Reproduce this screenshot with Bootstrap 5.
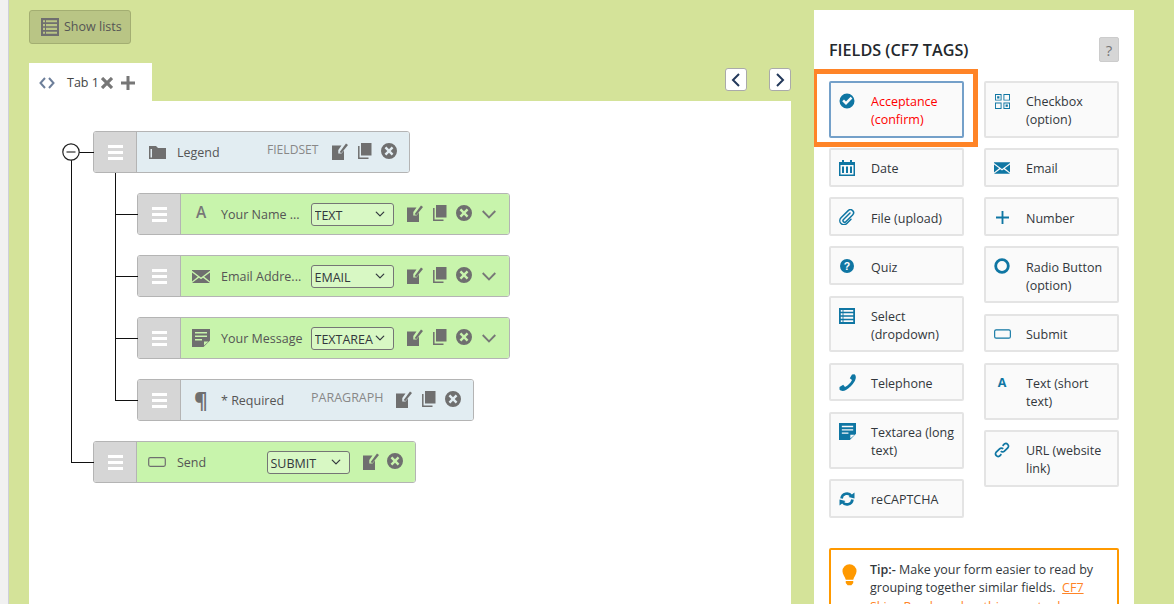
<!DOCTYPE html>
<html lang="en">
<head>
<meta charset="utf-8">
<title>CF7 Skins Form</title>
<link href="https://cdn.jsdelivr.net/npm/bootstrap@5.3.0/dist/css/bootstrap.min.css" rel="stylesheet">
<style>
html,body{height:604px;overflow:hidden}
body{font-family:"Open Sans","Noto Sans",sans-serif;font-size:12.5px;line-height:18.2px;color:#32373c;background:#f1f1f1;padding-left:8px}
.page-bg{background:#d4e399;border-left:1px solid #ced0d8;height:604px;overflow:hidden;padding:10px 40px 0 20px}
.col-left{width:762px}
.col-right{width:320px;background:#fff;padding:0 15px;height:594px;overflow:hidden}
.lists-btn{width:102px;height:34px;background:#b9c585;border:1px solid #a3ae72;border-radius:3px;padding:0 0 0 11px;color:#555;gap:5px;font-size:12.5px}
.lists-btn svg{color:#6f6f6f}
.tabs-row{margin-top:19px;height:38px}
.tab-head{width:123px;height:38px;background:#fff;padding:2px 0 0 10px;color:#444}
.tab-tool{color:#777;flex:none;display:block}
.tab-label{margin-left:12px;margin-right:2px}
.pager{gap:22px;padding-top:5px}
.pager-btn{width:22px;height:23px;background:#fff;border:1px solid #aaa;border-radius:3px;padding:0;color:#23395b}
.canvas{background:#fff;height:503px;padding:30px 0 0 64px;position:relative;gap:20px}
.tree-kids{padding-left:44px;gap:20px}
.node{height:42px;position:relative;border:1px solid #b4b4b4;border-radius:3px;color:#555}
.node::before{content:"";position:absolute;border-left:1px solid #111;border-bottom:1px solid #111}
.kid::before{left:-23px;width:23px;top:-42px;height:63px}
.kid-first::before{top:-21px;height:42px}
.root-last::before{left:-23px;width:23px;top:-282px;height:303px}
.root-first::before{left:-15px;width:15px;top:20px;height:1px;border-left:0;border-bottom:1px solid #111}
.root-first::after{content:"";position:absolute;left:21px;top:41px;height:21px;border-left:1px solid #111}
.minus-toggle{position:absolute;left:-32px;top:11px;width:18px;height:18px;display:block;z-index:1}
.trunk-top{position:absolute;left:-23px;top:28px;height:40px;border-left:1px solid #111}
.w-fieldset{width:317px}.w-kid{width:373px}.w-para{width:337px}.w-send{width:323px}
.grip{width:43px;background:#d6d6d6;border-right:1px solid #b4b4b4;border-radius:2px 0 0 2px;flex:none;color:#fff}
.node-body{flex:1;border-radius:0 2px 2px 0;position:relative}
.blue-body{background:#e2edf2}
.green-body{background:#c8f4ac}
.node-icon{width:18px;margin-left:11px;flex:none;color:#6f6f6f;text-align:center;line-height:1}
.node-label{margin-left:11px;width:90px;flex:none;white-space:nowrap;padding-top:2px}
.glyph-a{font-size:15.5px;font-weight:600;color:#777;margin-top:-2px}
.glyph-p{font-size:21px;font-weight:700}
.type-name{color:#888;position:relative;top:-2px;flex:none}
.type-fs{width:52px;font-size:12.1px}
.type-pg{width:72px}
.tree-select{width:83px;height:23px;flex:none;font-size:12.5px;line-height:20px;padding:2px 0 0 2.500px;color:#32373c;background-color:#d8f8c4;background-size:12px 10px;background-position:right 7px center;border:1px solid #757575;border-radius:3px;font-family:inherit}
.tool{color:#6f6f6f;flex:none;display:block}
.tools{gap:9.500px;margin-left:13px;margin-top:-2px}
.tools-short{gap:8px}
.chev{margin-left:.5px;margin-top:2px;color:#777}
.panel-head{height:71px;padding-top:27px}
.panel-title{font-size:16.200px;font-weight:600;margin:1px 0 0;color:#23282d;line-height:24px}
.help-btn{width:20px;height:25px;background:#d6d6d6;border:1px solid #ccc;border-radius:2px;padding:0;color:#777;font-size:15px;line-height:22px}
.tag-cols{gap:20px}
.tag-col{width:135px;gap:10.500px}
.tag-item{position:relative;background:#fafafa;border:2px solid #e4e4e4;border-radius:2px;padding:10.200px 4px 6.200px 40px;margin:0}
.tag-icon{position:absolute;left:7px;top:9px;width:18px;height:18px;color:#0f76a3;display:flex;align-items:center;justify-content:center;font-weight:700;line-height:1}
.tag-item.tag-active{border-color:#74a0c9;color:#f00}
.tag-item.tag-active::after{content:"";position:absolute;left:-19px;right:-16px;top:-14px;bottom:-11px;border:5px solid #ff8427}
.tip-box{position:relative;width:290px;margin-top:30px;border:2px solid #f90;border-radius:2px;padding:11.500px 8px 0 39px}
.tip-bulb{position:absolute;left:11px;top:14px;color:#f90}
.tip-link{color:#ff8427}
</style>
</head>
<body>
<svg width="0" height="0" class="d-block position-absolute">
<defs>
<symbol id="i-list" viewBox="0 0 18 18"><path fill="currentColor" fill-rule="evenodd" d="M0 0H18V18H0ZM2 2.300V4.300H4V2.300ZM5 2.300V4.300H16V2.300ZM2 6V8.200H4V6ZM5 6V8.200H16V6ZM2 9.800V12H4V9.800ZM5 9.800V12H16V9.800ZM2 13.700V15.800H4V13.700ZM5 13.700V15.800H16V13.700Z"/></symbol>
<symbol id="i-edit" viewBox="0 0 16 17"><path fill="currentColor" d="M0 2.500H9.500L6.300 7V10.500H9.500L12 7.500V17H0Z"/><path fill="currentColor" d="M7.500 9.200 14 .5 16 2 9.500 10Z"/></symbol>
<symbol id="i-copy" viewBox="0 0 14 16"><path fill="currentColor" d="M3 0H13.500V12.500H3Z"/><path fill="none" stroke="currentColor" stroke-width="1.500" d="M.8 3V15.200H10.500"/></symbol>
<symbol id="i-close" viewBox="0 0 16 16"><path fill="currentColor" fill-rule="evenodd" d="M8 0a8 8 0 1 0 0 16a8 8 0 1 0 0-16ZM5.300 3.600 8 6.300 10.700 3.600 12.400 5.300 9.700 8 12.400 10.700 10.700 12.400 8 9.700 5.300 12.400 3.600 10.700 6.300 8 3.600 5.300Z"/></symbol>
<symbol id="i-chev" viewBox="0 0 14 9"><path fill="none" stroke="currentColor" stroke-width="1.800" d="M.7 1 7 7.500 13.300 1"/></symbol>
<symbol id="i-folder" viewBox="0 0 17 13"><path fill="currentColor" fill-rule="evenodd" d="M0 0H7L9 2H17V13H0ZM1.500 3V11.500H3V3Z"/></symbol>
<symbol id="i-mail" viewBox="0 0 18 13"><path fill="currentColor" d="M0 0H18V.8L9 7.500 0 .8ZM0 2.500 5.800 6.800 0 11.500ZM18 2.500V11.500L12.200 6.800ZM7 7.800 9 9.300 11 7.800 18 13H0Z"/></symbol>
<symbol id="i-note" viewBox="0 0 18 18"><path fill="currentColor" fill-rule="evenodd" d="M0 0H18V11.500L11.500 18H0ZM3 3V4.500H15V3ZM3 6.500V8H15V6.500ZM3 10V11.500H10V10ZM12 12.500V16.500L16.500 12.500Z"/></symbol>
<symbol id="i-button" viewBox="0 0 18 10"><rect x=".7" y=".7" width="16.600" height="8.600" rx="1.500" fill="none" stroke="currentColor" stroke-width="1.200"/></symbol>
<symbol id="i-check" viewBox="0 0 16 16"><path fill="currentColor" fill-rule="evenodd" d="M8 .5a7.500 7.500 0 1 0 0 15a7.500 7.500 0 1 0 0-15ZM11.600 3.800 13.400 5.600 7 12 3.200 8.300 5 6.500 7 8.400Z"/></symbol>
<symbol id="i-box" viewBox="0 0 16 16"><path fill="currentColor" fill-rule="evenodd" d="M0 0H7V7H0ZM1 1V6H6V1ZM2.300 2.300H4.700V4.700H2.300ZM9 0H16V7H9ZM10 1V6H15V1ZM0 9H7V16H0ZM1 10V15H6V10ZM9 9H16V16H9ZM10 10V15H15V10ZM11.300 11.300H13.700V13.700H11.300Z"/></symbol>
<symbol id="i-cal" viewBox="0 0 16 16"><path fill="currentColor" fill-rule="evenodd" d="M3 0H5V2H11V0H13V2H16V16H0V2H3ZM1.500 5V14.500H14.500V5ZM3 6.500H5V13H3ZM7 6.500H9V13H7ZM11 6.500H13V13H11Z"/></symbol>
<symbol id="i-clip" viewBox="0 0 16 16"><path fill="none" stroke="currentColor" stroke-width="1.500" stroke-linecap="round" d="M11 4 4.500 10.500a1.600 1.600 0 0 0 2.300 2.300L13.600 6a3 3 0 0 0-4.400-4.400L2 8.800a4 4 0 0 0 5.800 5.700L12 10.300"/></symbol>
<symbol id="i-plus" viewBox="0 0 14 14"><path fill="currentColor" d="M6 0H8V6H14V8H8V14H6V8H0V6H6Z"/></symbol>
<symbol id="i-plus-bold" viewBox="0 0 14 14"><path fill="currentColor" d="M5.500 0H8.500V5.500H14V8.500H8.500V14H5.500V8.500H0V5.500H5.500Z"/></symbol>
<symbol id="i-ring" viewBox="0 0 16 16"><circle cx="8" cy="8" r="6.300" fill="none" stroke="currentColor" stroke-width="2.800"/></symbol>
<symbol id="i-phone" viewBox="0 0 17 17"><path fill="currentColor" d="M.5 13 4.200 10.800 6 13C9 11.500 11.500 9 13 6L10.800 4.200 13 .5 15.500.2C17.500 2 17 4.500 15.500 7.500 13.500 11 10.500 14 7 16 4.500 17.300 2 17.300.5 15.500Z"/></symbol>
<symbol id="i-link" viewBox="0 0 16 16"><path fill="none" stroke="currentColor" stroke-width="1.700" d="M6.800 9.200a2.500 2.500 0 0 0 3.600 0L14 5.600A2.600 2.600 0 0 0 10.400 2L8.600 3.800M9.200 6.800a2.500 2.500 0 0 0-3.600 0L2 10.400A2.600 2.600 0 0 0 5.600 14L7.400 12.200"/></symbol>
<symbol id="i-sync" viewBox="0 0 16 14"><path fill="none" stroke="currentColor" stroke-width="2.600" d="M2.500 6.500A5.500 5.500 0 0 1 12.500 4M13.500 7.500A5.500 5.500 0 0 1 3.500 10"/><path fill="currentColor" d="M9.500 5 15.500 6.500V.5ZM6.500 9 .5 7.500V13.500Z"/></symbol>
<symbol id="i-bulb" viewBox="0 0 16 23"><path fill="currentColor" d="M8 0a7.500 7.500 0 0 1 7.500 7.500c0 3.500-3 6-3.500 9H4c-.5-3-3.500-5.500-3.500-9A7.500 7.500 0 0 1 8 0ZM4 18H12V20L10 22.500H6L4 20Z"/></symbol>
<symbol id="i-code" viewBox="0 0 16 12"><path fill="none" stroke="#6d7f9a" stroke-width="2" d="M6 1 1.500 6 6 11M10 1 14.500 6 10 11"/></symbol>
<symbol id="i-x" viewBox="0 0 12 12"><path fill="none" stroke="currentColor" stroke-width="3.200" d="M1 1 11 11M11 1 1 11"/></symbol>
<symbol id="i-grip" viewBox="0 0 15 15"><path fill="currentColor" d="M0 0H15V3H0ZM0 6H15V9H0ZM0 12H15V15H0Z"/></symbol>
</defs>
</svg>

<div class="page-bg d-flex justify-content-between">
  <div class="col-left">
    <button class="lists-btn btn d-flex align-items-center" type="button"><svg width="18" height="18"><use href="#i-list"/></svg>Show lists</button>
    <div class="tabs-row d-flex justify-content-between">
      <div class="tab-head d-flex align-items-center">
        <svg width="16" height="12"><use href="#i-code"/></svg>
        <span class="tab-label">Tab 1</span>
        <svg class="tab-tool" width="12" height="12"><use href="#i-x"/></svg>
        <svg class="tab-tool ms-2" width="14" height="14"><use href="#i-plus-bold"/></svg>
      </div>
      <div class="pager d-flex">
        <button class="pager-btn btn d-flex align-items-center justify-content-center" type="button" aria-label="Previous"><svg width="10" height="14"><path fill="none" stroke="currentColor" stroke-width="2" d="M8 1 2 7 8 13"/></svg></button>
        <button class="pager-btn btn d-flex align-items-center justify-content-center" type="button" aria-label="Next"><svg width="10" height="14"><path fill="none" stroke="currentColor" stroke-width="2" d="M2 1 8 7 2 13"/></svg></button>
      </div>
    </div>
    <div class="canvas d-flex flex-column">
      <div class="node root-first w-fieldset d-flex">
        <svg class="minus-toggle" width="18" height="18"><circle cx="9" cy="9" r="8.200" fill="#fff" stroke="#222" stroke-width="1.200"/><path d="M4.500 9H13.500" stroke="#777" stroke-width="1.800"/></svg>
        <span class="trunk-top"></span>
        <div class="grip d-flex align-items-center justify-content-center"><svg width="15" height="15"><use href="#i-grip"/></svg></div>
        <div class="node-body blue-body d-flex align-items-center">
          <span class="node-icon"><svg width="17" height="13"><use href="#i-folder"/></svg></span>
          <span class="node-label">Legend</span>
          <span class="type-name type-fs">FIELDSET</span>
          <div class="tools d-flex align-items-center"><svg class="tool" width="16" height="17"><use href="#i-edit"/></svg><svg class="tool" width="14" height="16"><use href="#i-copy"/></svg><svg class="tool" width="16" height="16"><use href="#i-close"/></svg></div>
        </div>
      </div>
      <div class="tree-kids d-flex flex-column">
        <div class="node kid kid-first w-kid d-flex">
          <div class="grip d-flex align-items-center justify-content-center"><svg width="15" height="15"><use href="#i-grip"/></svg></div>
          <div class="node-body green-body d-flex align-items-center">
            <span class="node-icon glyph-a">A</span>
            <span class="node-label">Your Name ...</span>
            <select class="tree-select form-select"><option>TEXT</option></select>
            <div class="tools d-flex align-items-center"><svg class="tool" width="16" height="17"><use href="#i-edit"/></svg><svg class="tool" width="14" height="16"><use href="#i-copy"/></svg><svg class="tool" width="16" height="16"><use href="#i-close"/></svg><svg class="tool chev" width="14" height="9"><use href="#i-chev"/></svg></div>
          </div>
        </div>
        <div class="node kid w-kid d-flex">
          <div class="grip d-flex align-items-center justify-content-center"><svg width="15" height="15"><use href="#i-grip"/></svg></div>
          <div class="node-body green-body d-flex align-items-center">
            <span class="node-icon"><svg width="18" height="13"><use href="#i-mail"/></svg></span>
            <span class="node-label">Email Addre...</span>
            <select class="tree-select form-select"><option>EMAIL</option></select>
            <div class="tools d-flex align-items-center"><svg class="tool" width="16" height="17"><use href="#i-edit"/></svg><svg class="tool" width="14" height="16"><use href="#i-copy"/></svg><svg class="tool" width="16" height="16"><use href="#i-close"/></svg><svg class="tool chev" width="14" height="9"><use href="#i-chev"/></svg></div>
          </div>
        </div>
        <div class="node kid w-kid d-flex">
          <div class="grip d-flex align-items-center justify-content-center"><svg width="15" height="15"><use href="#i-grip"/></svg></div>
          <div class="node-body green-body d-flex align-items-center">
            <span class="node-icon"><svg width="18" height="18"><use href="#i-note"/></svg></span>
            <span class="node-label">Your Message</span>
            <select class="tree-select form-select"><option>TEXTAREA</option></select>
            <div class="tools d-flex align-items-center"><svg class="tool" width="16" height="17"><use href="#i-edit"/></svg><svg class="tool" width="14" height="16"><use href="#i-copy"/></svg><svg class="tool" width="16" height="16"><use href="#i-close"/></svg><svg class="tool chev" width="14" height="9"><use href="#i-chev"/></svg></div>
          </div>
        </div>
        <div class="node kid w-para d-flex">
          <div class="grip d-flex align-items-center justify-content-center"><svg width="15" height="15"><use href="#i-grip"/></svg></div>
          <div class="node-body blue-body d-flex align-items-center">
            <span class="node-icon glyph-p">¶</span>
            <span class="node-label">* Required</span>
            <span class="type-name type-pg">PARAGRAPH</span>
            <div class="tools d-flex align-items-center"><svg class="tool" width="16" height="17"><use href="#i-edit"/></svg><svg class="tool" width="14" height="16"><use href="#i-copy"/></svg><svg class="tool" width="16" height="16"><use href="#i-close"/></svg></div>
          </div>
        </div>
      </div>
      <div class="node root-last w-send d-flex">
        <div class="grip d-flex align-items-center justify-content-center"><svg width="15" height="15"><use href="#i-grip"/></svg></div>
        <div class="node-body green-body d-flex align-items-center">
          <span class="node-icon"><svg width="18" height="10"><use href="#i-button"/></svg></span>
          <span class="node-label">Send</span>
          <select class="tree-select form-select"><option>SUBMIT</option></select>
          <div class="tools tools-short d-flex align-items-center"><svg class="tool" width="16" height="17"><use href="#i-edit"/></svg><svg class="tool" width="16" height="16"><use href="#i-close"/></svg></div>
        </div>
      </div>
    </div>
  </div>
  <div class="col-right">
    <div class="panel-head d-flex justify-content-between align-items-start">
      <h2 class="panel-title">FIELDS (CF7 TAGS)</h2>
      <button class="help-btn btn" type="button">?</button>
    </div>
    <div class="tag-cols d-flex align-items-start">
      <div class="tag-col d-flex flex-column">
        <div class="tag-item tag-active"><span class="tag-icon"><svg width="16" height="16"><use href="#i-check"/></svg></span>Acceptance (confirm)</div>
        <div class="tag-item"><span class="tag-icon"><svg width="16" height="16"><use href="#i-cal"/></svg></span>Date</div>
        <div class="tag-item"><span class="tag-icon"><svg width="16" height="16"><use href="#i-clip"/></svg></span>File (upload)</div>
        <div class="tag-item"><span class="tag-icon"><svg width="14" height="14"><circle cx="7" cy="7" r="7" fill="currentColor"/><text x="7" y="11" text-anchor="middle" font-size="10.500" font-weight="700" fill="#fff" font-family="Liberation Sans, sans-serif">?</text></svg></span>Quiz</div>
        <div class="tag-item"><span class="tag-icon"><svg width="16" height="16"><use href="#i-list"/></svg></span>Select (dropdown)</div>
        <div class="tag-item"><span class="tag-icon"><svg width="17" height="17"><use href="#i-phone"/></svg></span>Telephone</div>
        <div class="tag-item"><span class="tag-icon"><svg width="17" height="17"><use href="#i-note"/></svg></span>Textarea (long text)</div>
        <div class="tag-item"><span class="tag-icon"><svg width="16" height="14"><use href="#i-sync"/></svg></span>reCAPTCHA</div>
      </div>
      <div class="tag-col d-flex flex-column">
        <div class="tag-item"><span class="tag-icon"><svg width="15" height="15"><use href="#i-box"/></svg></span>Checkbox (option)</div>
        <div class="tag-item"><span class="tag-icon"><svg width="16" height="12"><use href="#i-mail"/></svg></span>Email</div>
        <div class="tag-item"><span class="tag-icon"><svg width="13" height="13"><use href="#i-plus"/></svg></span>Number</div>
        <div class="tag-item"><span class="tag-icon"><svg width="16" height="16"><use href="#i-ring"/></svg></span>Radio Button (option)</div>
        <div class="tag-item"><span class="tag-icon"><svg width="17" height="10"><use href="#i-button"/></svg></span>Submit</div>
        <div class="tag-item"><span class="tag-icon">A</span>Text (short text)</div>
        <div class="tag-item"><span class="tag-icon"><svg width="16" height="16"><use href="#i-link"/></svg></span>URL (website link)</div>
      </div>
    </div>
    <div class="tip-box">
      <svg class="tip-bulb" width="15" height="22"><use href="#i-bulb"/></svg>
      <strong class="fw-semibold">Tip:-</strong> Make your form easier to read by grouping together similar fields. &nbsp;<a class="tip-link" href="#">CF7 Skins Ready makes this easy to do.</a>
    </div>
  </div>
</div>
</body>
</html>
